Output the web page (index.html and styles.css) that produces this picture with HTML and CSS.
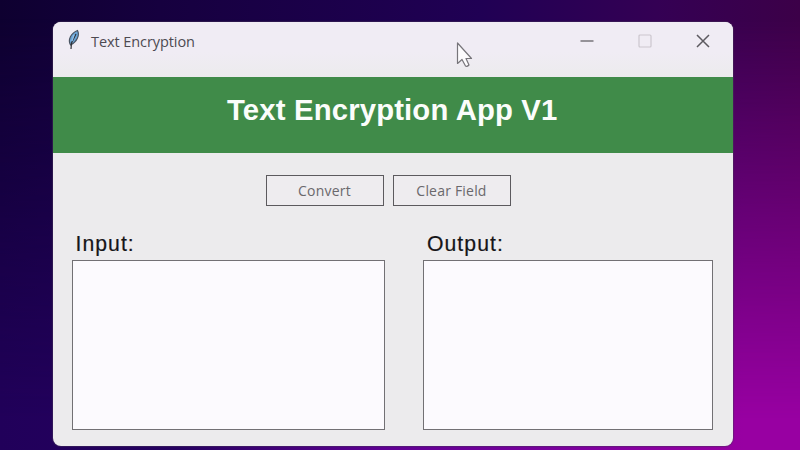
FILE: index.html
```html
<!DOCTYPE html>
<html lang="en">
<head>
<meta charset="utf-8">
<title>Text Encryption</title>
<link rel="stylesheet" href="styles.css">
</head>
<body>
<main class="window">
  <header class="titlebar">
    <svg class="feather" width="16" height="22" viewBox="0 0 16 22">
      <path d="M3.500 16C0.500 11 4 4 10.500 1.500C13 6 10 13 3.500 16Z" fill="#6ba4d6" stroke="#4b5563" stroke-width="1.200"/>
      <path d="M9 5L4.500 14L4 20" fill="none" stroke="#303238" stroke-width="1.200"/>
      <path d="M5 12L7 6" fill="none" stroke="#8fbfe8" stroke-width="1.300"/>
    </svg>
    <span class="caption">Text Encryption</span>
    <div class="controls">
      <svg width="14" height="14" viewBox="0 0 14 14"><path d="M0.500 7H13.500" stroke="#77747a" stroke-width="1.600"/></svg>
      <svg width="14" height="14" viewBox="0 0 14 14"><rect x="1" y="1" width="12" height="12" rx="1" fill="none" stroke="#cbc6cd" stroke-width="1.200"/></svg>
      <svg width="14" height="14" viewBox="0 0 14 14"><path d="M1 1L13 13M13 1L1 13" stroke="#5d5a60" stroke-width="1.500"/></svg>
    </div>
  </header>
  <h1 class="banner"><span>Text Encryption App V1</span></h1>
  <div class="actions">
    <button class="btn convert">Convert</button>
    <button class="btn clear">Clear Field</button>
  </div>
  <div class="fields">
    <label class="field input"><span>Input:</span><textarea></textarea></label>
    <label class="field output"><span>Output:</span><textarea readonly></textarea></label>
  </div>
</main>
<svg class="cursor" width="18" height="26" viewBox="0 0 18 26">
  <path d="M1.500 1V21.500L6 17.500L9.500 24Q11 25 13 23L10 16.500H15.500Z" fill="#fcfbfd" stroke="#77757a" stroke-width="1.200" stroke-linejoin="round"/>
</svg>
</body>
</html>
```
FILE: styles.css
```css
* { box-sizing: border-box; }
body {
  margin: 0;
  height: 450px;
  overflow: hidden;
  padding: 22px 67px 4px 53px;
  background: linear-gradient(90deg, #0e0030 0%, #16003f 20%, #200054 60%, #340054 82%, #3c0048 100%);
  font-family: "Liberation Sans", Arial, sans-serif;
}
/* Lower half of the wallpaper, faded in from the top */
body::before {
  content: "";
  position: absolute;
  inset: 0;
  z-index: -1;
  background: linear-gradient(90deg, #21005a 0%, #250060 22%, #600094 48%, #8200a0 75%, #9800a2 93%);
  -webkit-mask-image: linear-gradient(transparent 4%, #000 93%);
  mask-image: linear-gradient(transparent 4%, #000 93%);
}
.window {
  height: 424px;
  display: flex;
  flex-direction: column;
  background: #ecebed;
  border-radius: 8px;
  overflow: hidden;
  box-shadow: 0 0 1px 1px rgba(70, 50, 90, .5);
}
.titlebar {
  height: 54.500px;
  flex: none;
  display: flex;
  align-items: flex-start;
  background: linear-gradient(#f0ecf4 55%, #ecebed);
}
.feather { margin: 7px 0 0 13.500px; }
.caption {
  margin: 9px 0 0 8.500px;
  font: 14.500px/22px "Open Sans", sans-serif;
  letter-spacing: -.08px;
  color: #4d4a51;
}
.controls { display: flex; gap: 44px; margin: 12px 23.400px 0 auto; }
.banner {
  flex: none;
  height: 76.500px;
  margin: 0;
  padding: 15px 0 0 174px;
  background: #408b49;
  color: #fbfdfb;
  font-size: 29.300px;
  line-height: 36px;
  letter-spacing: .15px;
  white-space: nowrap;
}
.actions { display: flex; gap: 9px; margin: 22px 0 0 212.500px; }
.btn {
  width: 118px;
  height: 31px;
  padding: 0;
  border: 1px solid #5c5a5e;
  background: #eeecef;
  color: #6a686c;
  font: 14px/28px "Open Sans", sans-serif;
  letter-spacing: .2px;
}
.fields { display: flex; gap: 38px; margin: 24px 19px 0; }
.field { display: flex; flex-direction: column; }
.field span {
  height: 30px;
  padding-left: 3.500px;
  font-size: 21.200px;
  line-height: 28px;
  letter-spacing: 1.050px;
  -webkit-text-stroke: .2px #161518;
  color: #161518;
}
.output span { padding-left: 4px; }
.input { width: 313px; }
.output { width: 290px; }
textarea {
  width: 100%;
  height: 170px;
  border: 1px solid #727074;
  background: #fcfafe;
  resize: none;
}
.cursor { position: absolute; left: 456px; top: 42px; }
```
